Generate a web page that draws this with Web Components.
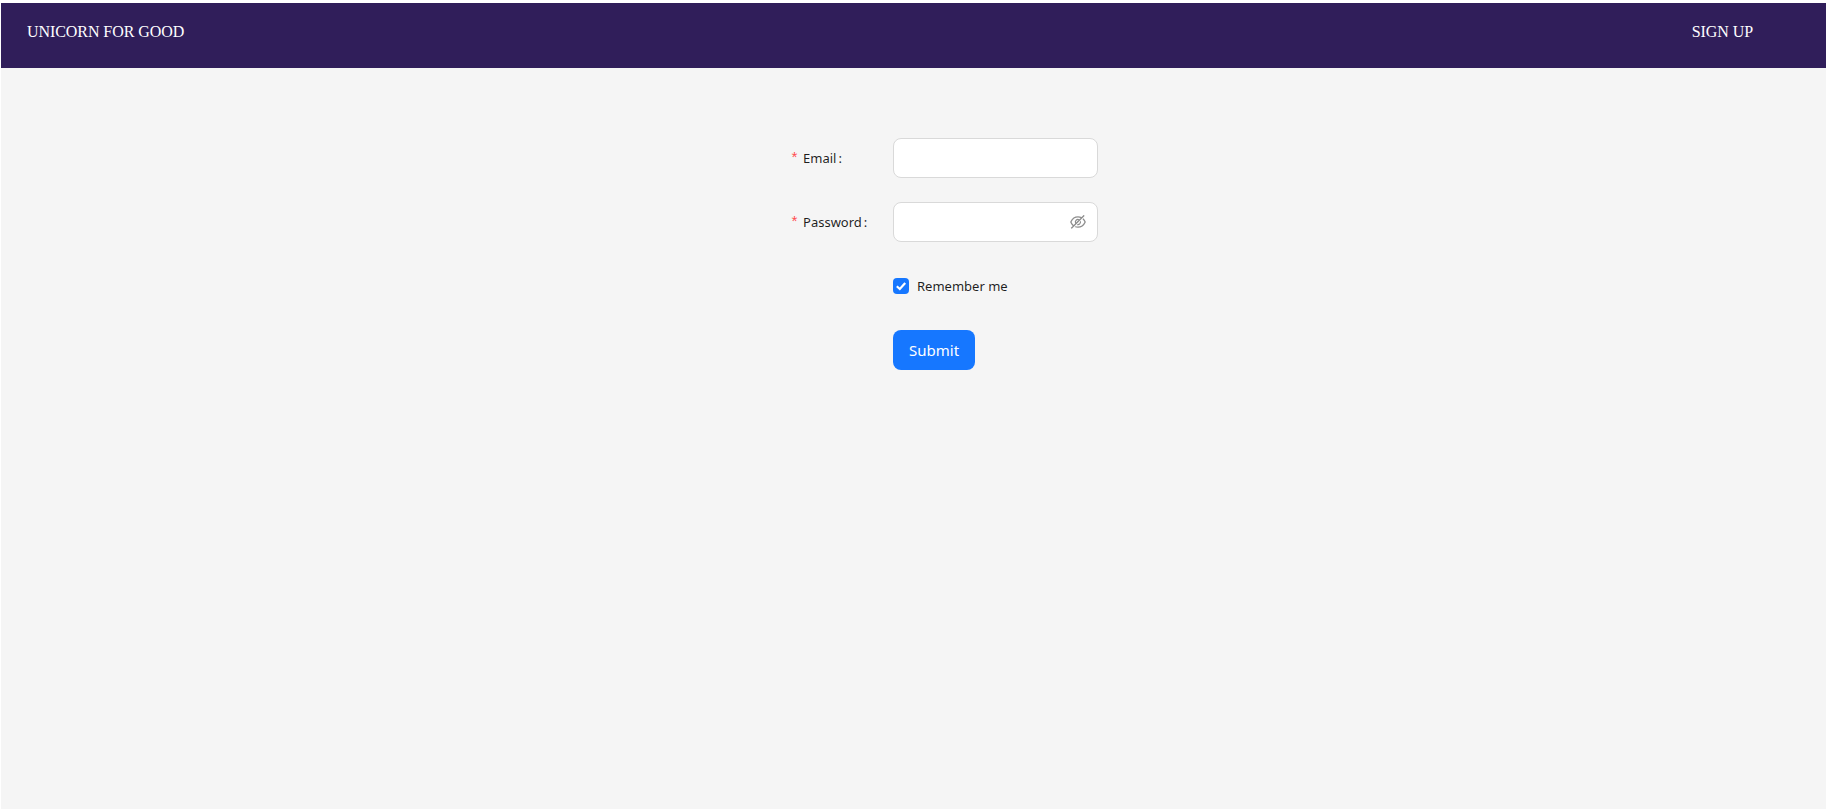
<!DOCTYPE html>
<html lang="en">
<head>
<meta charset="utf-8">
<title>Unicorn for Good</title>
<style>
  html, body { margin: 0; height: 100%; background: #fff; }
  body { padding: 3px 0 0 1px; box-sizing: border-box; font-family: "Noto Sans", sans-serif; }
</style>
</head>
<body>
<app-page>
  <app-header slot="header">
    <span slot="brand">UNICORN FOR GOOD</span>
    <span slot="action">SIGN UP</span>
  </app-header>
  <login-form>
    <form-row label="Email" required><text-field></text-field></form-row>
    <form-row label="Password" required><text-field type="password"></text-field></form-row>
    <form-row><check-box checked>Remember me</check-box></form-row>
    <form-row><primary-button>Submit</primary-button></form-row>
  </login-form>
</app-page>

<script>
class AppPage extends HTMLElement {
    constructor() {
        super();
        this.shadow = this.attachShadow({ mode: "open" });
        this.shadow.innerHTML = `
          <style>
            :host { display: flex; flex-direction: column; height: calc(100vh - 3px); background: #f5f5f5; }
            main { flex: 1; padding: 70px 0 0 789px; }
          </style>
          <slot name="header"></slot>
          <main><slot></slot></main>
        `;
    }
}

class AppHeader extends HTMLElement {
    constructor() {
        super();
        this.shadow = this.attachShadow({ mode: "open" });
        this.shadow.innerHTML = `
          <style>
            :host {
              display: flex;
              justify-content: space-between;
              align-items: center;
              box-sizing: border-box;
              height: 65px;
              padding: 0 73px 8px 26px;
              background: #301e5a;
              color: #fff;
              font-family: "Liberation Serif", serif;
              font-size: 16px;
              letter-spacing: -0.07px;
            }
          </style>
          <slot name="brand"></slot>
          <slot name="action"></slot>
        `;
    }
}

class LoginForm extends HTMLElement {
    constructor() {
        super();
        this.shadow = this.attachShadow({ mode: "open" });
        this.shadow.innerHTML = `
          <style>
            :host { display: flex; flex-direction: column; gap: 24px; width: 308px; }
          </style>
          <slot></slot>
        `;
    }
}

class FormRow extends HTMLElement {
    constructor() {
        super();
        this.shadow = this.attachShadow({ mode: "open" });
        const label = this.getAttribute("label");
        this.shadow.innerHTML = `
          <style>
            :host {
              display: grid;
              grid-template-columns: 103px 1fr;
              align-items: center;
              min-height: 40px;
              font-size: 13px;
              color: rgba(0, 0, 0, 0.88);
            }
            .star { color: #ff4d4f; margin-right: 4px; font-size: 15px; line-height: 1; font-family: "Liberation Mono", monospace; }
            .colon { margin-left: 2px; }
          </style>
          <div class="label">${label ? `<span class="star">*</span>${label}<span class="colon">:</span>` : ""}</div>
          <div><slot></slot></div>
        `;
    }
}

class TextField extends HTMLElement {
    constructor() {
        super();
        this.shadow = this.attachShadow({ mode: "open" });
        const isPassword = this.getAttribute("type") === "password";
        this.shadow.innerHTML = `
          <style>
            :host {
              display: flex;
              align-items: center;
              box-sizing: border-box;
              width: 205px;
              height: 40px;
              padding: 0 11px;
              background: #fff;
              border: 1px solid #d9d9d9;
              border-radius: 8px;
            }
            input { flex: 1; min-width: 0; border: 0; outline: 0; padding: 0; background: none; font: 16px "Noto Sans", sans-serif; }
            svg { width: 16px; height: 16px; margin-left: 4px; fill: rgba(0, 0, 0, 0.45); flex: none; }
          </style>
          <input type="${isPassword ? "password" : "text"}">
          ${isPassword ? `<svg viewBox="64 64 896 896"><path d="M942.2 486.2Q889.47 375.11 816.7 305l-50.88 50.88C807.31 395.53 843.45 447.4 874.7 512 791.5 684.2 673.4 766 512 766q-72.67 0-133.87-22.38L323 798.75Q408 838 512 838q288.3 0 430.2-300.3a60.29 60.29 0 000-51.5zm-63.57-320.64L836 122.88a8 8 0 00-11.32 0L715.31 232.2Q624.86 186 512 186q-288.3 0-430.2 300.3a60.3 60.3 0 000 51.5q56.69 119.4 136.5 191.41L112.48 835a8 8 0 000 11.31L155.17 889a8 8 0 0011.31 0l712.15-712.12a8 8 0 000-11.32zM149.3 512C232.6 339.8 350.7 258 512 258c54.54 0 104.13 9.36 149.12 28.39l-70.3 70.3a176 176 0 00-238.13 238.13l-83.42 83.42C223.1 637.49 183.3 582.28 149.3 512zm246.7 0a112.11 112.11 0 01146.2-106.69L401.31 546.2A112 112 0 01396 512z"/><path d="M508 624c-3.46 0-6.87-.16-10.25-.47l-52.82 52.82a176.09 176.09 0 00227.42-227.42l-52.82 52.82c.31 3.38.47 6.79.47 10.25a111.94 111.94 0 01-112 112z"/></svg>` : ""}
        `;
    }
}

class CheckBox extends HTMLElement {
    constructor() {
        super();
        this.shadow = this.attachShadow({ mode: "open" });
        this.shadow.innerHTML = `
          <style>
            :host { display: flex; align-items: center; gap: 8px; font-size: 13px; }
            .box {
              display: flex;
              align-items: center;
              justify-content: center;
              width: 16px;
              height: 16px;
              background: #1677ff;
              border-radius: 4px;
            }
            svg { width: 12px; height: 12px; fill: none; stroke: #fff; stroke-width: 2.2; }
          </style>
          <span class="box"><svg viewBox="0 0 12 12"><path d="M1.8 6.2 4.8 9 10.2 3"/></svg></span>
          <slot></slot>
        `;
    }
}

class PrimaryButton extends HTMLElement {
    constructor() {
        super();
        this.shadow = this.attachShadow({ mode: "open" });
        this.shadow.innerHTML = `
          <style>
            :host { display: inline-block; }
            button {
              height: 40px;
              padding: 0 16px;
              border: 0;
              border-radius: 8px;
              background: #1677ff;
              color: #fff;
              font: 15px "Noto Sans", sans-serif;
              cursor: pointer;
            }
          </style>
          <button><slot></slot></button>
        `;
    }
}

customElements.define("app-page", AppPage);
customElements.define("app-header", AppHeader);
customElements.define("login-form", LoginForm);
customElements.define("form-row", FormRow);
customElements.define("text-field", TextField);
customElements.define("check-box", CheckBox);
customElements.define("primary-button", PrimaryButton);
</script>
</body>
</html>
